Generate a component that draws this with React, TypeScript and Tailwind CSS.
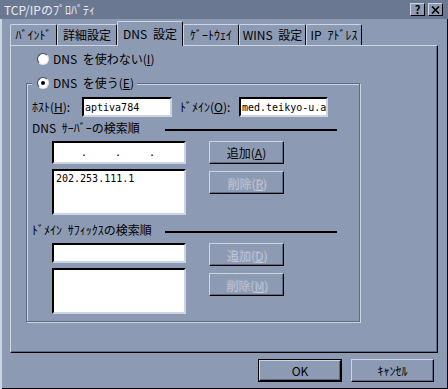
import type { ReactNode } from "react";

const jp = "font-['Noto_Sans_CJK_JP','Liberation_Sans',sans-serif] [word-spacing:3px]";

function Radio({ checked }: { checked?: boolean }) {
  return (
    <span className="flex h-[12px] w-[12px] items-center justify-center rounded-full border border-t-[#3a4252] border-l-[#3a4252] border-r-[#dfe5f0] border-b-[#dfe5f0] bg-white">
      {checked ? <span className="h-[4px] w-[4px] rounded-full bg-black" /> : null}
    </span>
  );
}

function Btn({
  children,
  disabled,
  isDefault,
  className,
}: {
  children: ReactNode;
  disabled?: boolean;
  isDefault?: boolean;
  className: string;
}) {
  const inner = (
    <div
      className={
        "flex h-full w-full items-center justify-center border border-t-[#cdd5e5] border-l-[#cdd5e5] border-r-black border-b-black shadow-[inset_-1px_-1px_0_#5d6a82] text-[12px] " +
        (disabled ? "text-[#a3adc2] [text-shadow:1px_1px_0_#c3cbdc]" : "text-black")
      }
    >
      {children}
    </div>
  );
  if (isDefault) {
    return <div className={"border border-black " + className}>{inner}</div>;
  }
  return <div className={className}>{inner}</div>;
}

function Field({ className, children }: { className: string; children?: ReactNode }) {
  return (
    <div
      className={
        "border-2 border-t-black border-l-black border-r-[#cdd5e5] border-b-[#cdd5e5] bg-white " +
        className
      }
    >
      {children}
    </div>
  );
}

const tabs = [
  { label: "ﾊﾞｲﾝﾄﾞ", w: "w-[47px]" },
  { label: "詳細設定", w: "w-[60px]" },
  { label: "DNS 設定", w: "w-[66px]", active: true },
  { label: "ｹﾞｰﾄｳｪｲ", w: "w-[56px]" },
  { label: "WINS 設定", w: "w-[67px]" },
  { label: "IP ｱﾄﾞﾚｽ", w: "w-[56px]" },
];

function SectionTitle({ children }: { children: ReactNode }) {
  return (
    <div className="flex h-[14px] items-center">
      <div className="w-[133px] text-[12px] leading-[14px] whitespace-nowrap">{children}</div>
      <div className="mt-[4px] h-[2px] w-[172px] bg-black" />
    </div>
  );
}

export default function App() {
  return (
    <div
      className={
        "flex h-[389px] w-[448px] flex-col bg-[#8d9ab3] shadow-[inset_2px_0_0_#cdd5e5,inset_-1px_-1px_0_#000] text-black " +
        jp
      }
    >
      {/* title bar */}
      <div className="flex h-[19px] items-center bg-[#6b7891] pl-[4px] pr-[5px]">
        <span className="text-[12px] leading-[14px] text-[#e8ecf2]">TCP/IPのﾌﾟﾛﾊﾟﾃｨ</span>
        <div className="ml-auto flex gap-[3px]">
          <div className="flex h-[13px] w-[15px] items-center justify-center border border-t-[#cdd5e5] border-l-[#cdd5e5] border-r-black border-b-black bg-[#8d9ab3] text-[11px] font-bold leading-none">
            ?
          </div>
          <div className="flex h-[13px] w-[15px] items-center justify-center border border-t-[#cdd5e5] border-l-[#cdd5e5] border-r-black border-b-black bg-[#8d9ab3]">
            <svg width="9" height="8" viewBox="0 0 9 8">
              <path d="M1 0.5 L8 7.5 M8 0.5 L1 7.5" stroke="#000" strokeWidth="1.6" />
            </svg>
          </div>
        </div>
      </div>

      <div className="flex flex-col pl-[10px] pt-[2px]">
        {/* tabs */}
        <div className="flex h-[24px] items-end">
          {tabs.map((t) =>
            t.active ? (
              <div
                key={t.label}
                className={
                  "relative z-10 -mb-[1px] flex h-[25px] items-center justify-center rounded-t-[2px] border-l border-t border-r border-t-[#cdd5e5] border-l-[#cdd5e5] border-r-black bg-[#8d9ab3] text-[12px] whitespace-nowrap " +
                  t.w
                }
              >
                {t.label}
              </div>
            ) : (
              <div
                key={t.label}
                className={
                  "flex h-[21px] items-center justify-center rounded-t-[2px] border-l border-t border-r border-t-[#cdd5e5] border-l-[#cdd5e5] border-r-black text-[12px] whitespace-nowrap " +
                  t.w
                }
              >
                {t.label}
              </div>
            )
          )}
        </div>

        {/* panel */}
        <div className="flex h-[308px] w-[428px] flex-col border border-t-[#cdd5e5] border-l-[#cdd5e5] border-r-black border-b-black shadow-[inset_-1px_-1px_0_#5d6a82]">
          <div className="mt-[6px] flex h-[14px] items-center pl-[26px] text-[12px]">
            <Radio />
            <span className="ml-[4px]">
              DNS を使わない(<u>I</u>)
            </span>
          </div>

          <fieldset className="mt-[10px] ml-[15px] h-[246px] w-[334px] border border-[#5d6a82] pl-[5px] shadow-[inset_1px_1px_0_#cdd5e5,1px_1px_0_#cdd5e5]">
            <legend className="bg-[#8d9ab3] pl-[5px] pr-[3px]">
              <span className="flex h-[14px] items-center text-[12px]">
                <Radio checked />
                <span className="ml-[4px]">
                  DNS を使う(<u>E</u>)
                </span>
              </span>
            </legend>

            <div className="mt-[7px] flex h-[20px] items-center text-[12px]">
              <span className="w-[50px] whitespace-nowrap">
                ﾎｽﾄ(<u>H</u>):
              </span>
              <Field className="flex h-[20px] w-[90px] items-center pl-[1px] font-['DejaVu_Sans_Mono',monospace] text-[10px]">
                aptiva784
              </Field>
              <span className="ml-[8px] w-[59px] whitespace-nowrap">
                ﾄﾞﾒｲﾝ(<u>O</u>):
              </span>
              <Field className="flex h-[20px] w-[89px] items-center overflow-hidden pl-[1px] font-['DejaVu_Sans_Mono',monospace] text-[10px] whitespace-nowrap">
                med.teikyo-u.a
              </Field>
            </div>

            <div className="mt-[4px]">
              <SectionTitle>DNS ｻｰﾊﾞｰの検索順</SectionTitle>
            </div>

            <div className="mt-[6px] flex pl-[20px]">
              <div className="flex w-[134px] flex-col gap-[5px]">
                <Field className="flex h-[23px] items-center pl-[27px] font-['DejaVu_Sans_Mono',monospace] text-[10px]">
                  <span className="w-[34px]">.</span>
                  <span className="w-[34px]">.</span>
                  <span>.</span>
                </Field>
                <Field className="h-[46px] pl-[2px] pt-[1px] font-['DejaVu_Sans_Mono',monospace] text-[10px] leading-[13px]">
                  202.253.111.1
                </Field>
              </div>
              <div className="ml-[23px] flex flex-col gap-[7px]">
                <Btn className="h-[23px] w-[75px]">
                  追加(<u>A</u>)
                </Btn>
                <Btn disabled className="h-[23px] w-[75px]">
                  削除(<u>R</u>)
                </Btn>
              </div>
            </div>

            <div className="mt-[8px]">
              <SectionTitle>ﾄﾞﾒｲﾝ ｻﾌｨｯｸｽの検索順</SectionTitle>
            </div>

            <div className="mt-[6px] flex pl-[20px]">
              <div className="flex w-[134px] flex-col gap-[5px]">
                <Field className="h-[20px]" />
                <Field className="h-[46px]" />
              </div>
              <div className="ml-[23px] flex flex-col gap-[7px]">
                <Btn disabled className="h-[23px] w-[75px]">
                  追加(<u>D</u>)
                </Btn>
                <Btn disabled className="h-[23px] w-[75px]">
                  削除(<u>M</u>)
                </Btn>
              </div>
            </div>
          </fieldset>
        </div>

        {/* bottom buttons */}
        <div className="mt-[6px] flex w-[424px] justify-end gap-[9px]">
          <Btn isDefault className="h-[23px] w-[84px]">
            OK
          </Btn>
          <Btn className="h-[23px] w-[83px]">ｷｬﾝｾﾙ</Btn>
        </div>
      </div>
    </div>
  );
}
